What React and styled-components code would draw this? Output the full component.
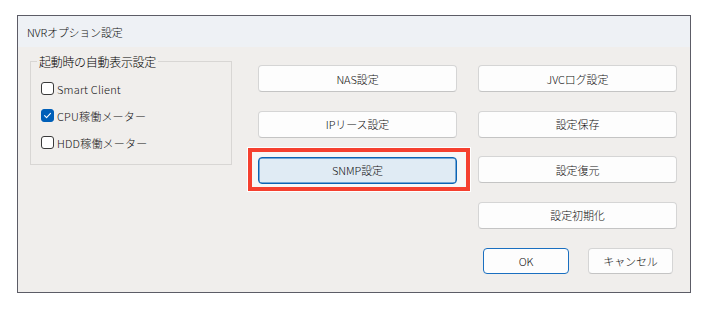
import styled, { createGlobalStyle } from "styled-components";

const GlobalStyle = createGlobalStyle`
  html, body {
    margin: 0;
    padding: 0;
    background: #ffffff;
  }
  body {
    font-family: "Noto Sans CJK JP", "Noto Sans", sans-serif;
    font-weight: 300;
    color: #111111;
  }
`;

const Page = styled.div`
  width: 708px;
  height: 310px;
  padding: 15px 0 0 17px;
  box-sizing: border-box;
`;

const Window = styled.div`
  width: 674px;
  height: 278px;
  box-sizing: border-box;
  border: 1px solid #5c5c66;
  background: #f0eeec;
  display: flex;
  flex-direction: column;
`;

const TitleBar = styled.div`
  height: 31px;
  background: #eef1f5;
  display: flex;
  align-items: center;
  padding-left: 9px;
  font-size: 11px;
  letter-spacing: -0.2px;
`;

const Body = styled.div`
  display: flex;
  padding: 6px 0 0 12px;
  gap: 26px;
`;

const Group = styled.fieldset`
  width: 202px;
  height: 112px;
  box-sizing: border-box;
  margin: 0;
  border: 1px solid #d8d6d4;
  padding: 10px 0 0 10px;
  display: flex;
  flex-direction: column;
  gap: 10px;
`;

const Legend = styled.legend`
  font-size: 12px;
  font-weight: 300;
  color: #000000;
  padding: 0 2px;
  margin-left: -4px;
  letter-spacing: -0.3px;
`;

const CheckRow = styled.label`
  display: flex;
  align-items: center;
  gap: 3px;
  font-size: 11px;
  height: 17px;
  letter-spacing: 0.2px;
`;

const Box = styled.span`
  width: 13px;
  height: 13px;
  box-sizing: border-box;
  border-radius: 3px;
  border: 1px solid ${(p) => (p.checked ? "#005fb8" : "#3a3a3a")};
  background: ${(p) => (p.checked ? "#005fb8" : "#ffffff")};
  display: flex;
  align-items: center;
  justify-content: center;
`;

const Buttons = styled.div`
  padding-top: 12px;
  display: grid;
  grid-template-columns: 199px 199px;
  grid-auto-rows: 27px;
  column-gap: 21px;
  row-gap: 18.5px;
`;

const Button = styled.button`
  font-family: inherit;
  font-weight: 300;
  font-size: 11px;
  color: #111111;
  background: ${(p) => (p.focused ? "#e0ebf4" : "#fdfdfd")};
  border: 1px solid ${(p) => (p.focused ? "#0a63b4" : "#d5d5d5")};
  border-bottom-color: ${(p) => (p.focused ? "#0a63b4" : "#c4c4c4")};
  box-shadow: ${(p) => (p.focused ? "inset 0 0 0 0.5px #0a63b4" : "none")};
  border-radius: 4px;
  padding: 0;
  width: 100%;
  height: 100%;
  letter-spacing: -0.1px;
`;

const Highlight = styled.div`
  position: relative;
  height: 100%;
  &::before {
    content: "";
    position: absolute;
    left: -10px;
    right: -13px;
    top: -8px;
    bottom: -8px;
    border: 4.5px solid #f5402f;
    outline: 1px solid #ffffff;
    background: #f7f7f7;
    box-sizing: border-box;
  }
  & > button {
    position: relative;
  }
`;

const Footer = styled.div`
  grid-column: 2;
  display: flex;
  justify-content: space-between;
  padding: 0 4px 0 5px;
  margin-top: 0.5px;
`;

const DialogButton = styled(Button)`
  width: ${(p) => p.w}px;
  border-color: ${(p) => (p.primary ? "#1a6fc0" : "#d5d5d5")};
  border-bottom-color: ${(p) => (p.primary ? "#1a6fc0" : "#c4c4c4")};
`;

const Check = () => (
  <svg width="9" height="9" viewBox="0 0 9 9">
    <path d="M1.6 4.7 L3.6 6.6 L7.5 2.4" fill="none" stroke="#ffffff" strokeWidth="1.1" strokeLinecap="round" strokeLinejoin="round" />
  </svg>
);

const options = [
  { label: "Smart Client", checked: false },
  { label: "CPU稼働メーター", checked: true },
  { label: "HDD稼働メーター", checked: false },
];

export default function App() {
  return (
    <Page>
      <GlobalStyle />
      <Window>
        <TitleBar>NVRオプション設定</TitleBar>
        <Body>
          <Group>
            <Legend>起動時の自動表示設定</Legend>
            {options.map((o) => (
              <CheckRow key={o.label}>
                <Box checked={o.checked}>{o.checked && <Check />}</Box>
                {o.label}
              </CheckRow>
            ))}
          </Group>
          <Buttons>
            <Button>NAS設定</Button>
            <Button>JVCログ設定</Button>
            <Button>IPリース設定</Button>
            <Button>設定保存</Button>
            <Highlight>
              <Button focused>SNMP設定</Button>
            </Highlight>
            <Button>設定復元</Button>
            <Button style={{ gridColumn: 2 }}>設定初期化</Button>
            <Footer>
              <DialogButton primary w={86}>OK</DialogButton>
              <DialogButton w={85}>キャンセル</DialogButton>
            </Footer>
          </Buttons>
        </Body>
      </Window>
    </Page>
  );
}
